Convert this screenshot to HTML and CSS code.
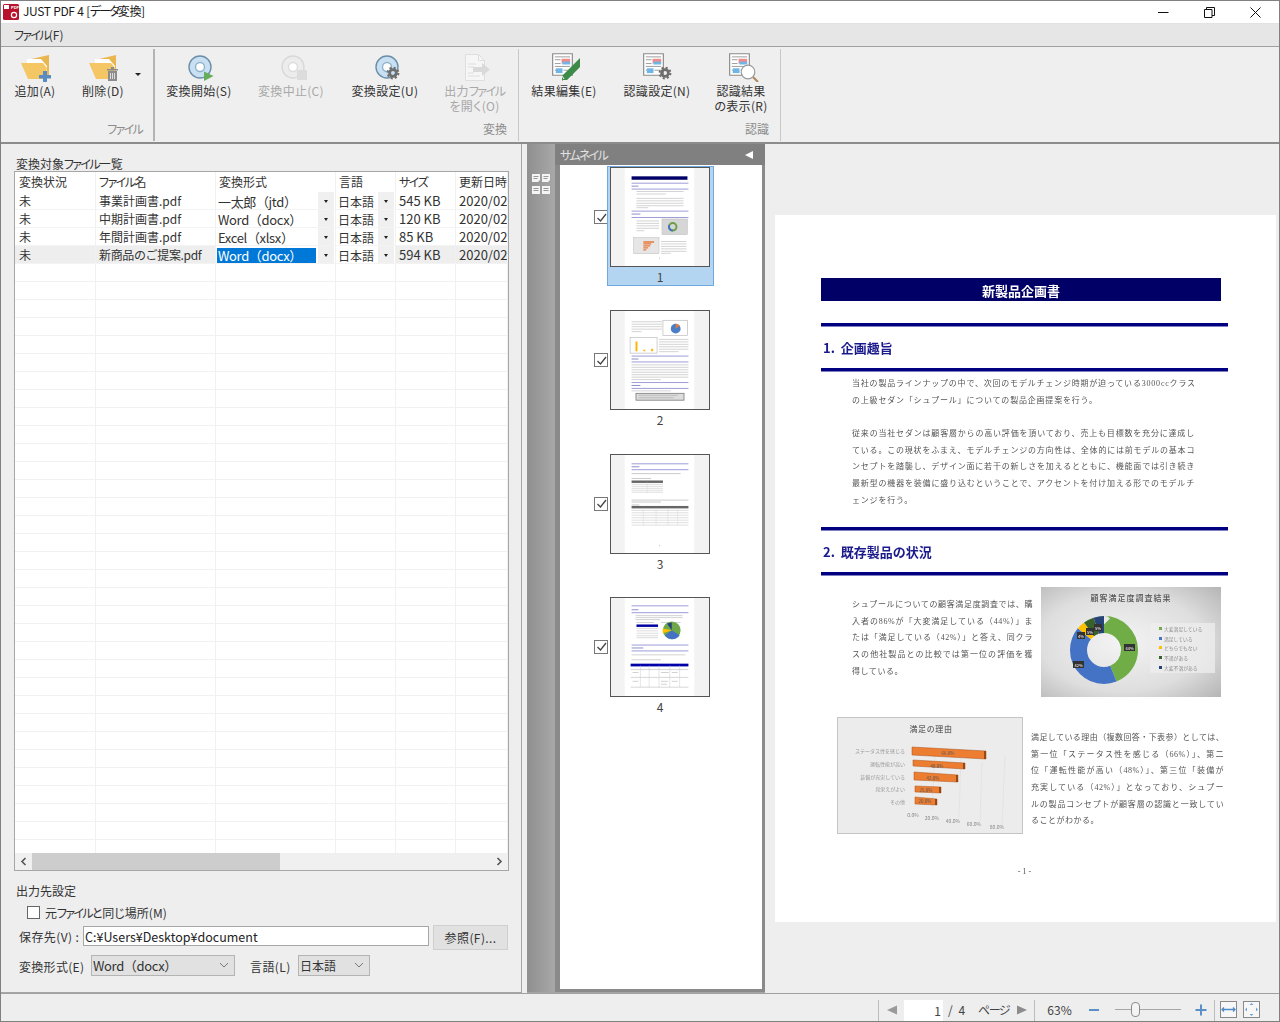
FILE: index.html
```html
<!DOCTYPE html>
<html lang="ja">
<head>
<meta charset="utf-8">
<title>JUST PDF 4 [データ変換]</title>
<link rel="stylesheet" href="styles.css">
</head>
<body>
<svg class="defs" width="0" height="0">
  <symbol id="gear" viewBox="-7 -7 14 14">
    <circle r="3.4" fill="none" stroke="#6e6e6e" stroke-width="2.8"/>
    <circle r="5.4" fill="none" stroke="#6e6e6e" stroke-width="2" stroke-dasharray="2.1 2.14"/>
  </symbol>
  <symbol id="resdoc" viewBox="0 0 22 24">
    <path d="M.7.7h20.6v22.6H.7z" fill="#fff" stroke="#8a8a8a" stroke-width="1.2"/>
    <path d="M3 4h16M3 7h6M3 11h6M3 14h16M3 18h3M12 18h7" stroke="#9a9a9a" stroke-width="1"/>
    <rect x="10" y="6" width="9" height="5" fill="#f08b8b"/>
    <rect x="4" y="16" width="7" height="5" fill="#6fb5e6"/>
    <rect x="11" y="9" width="8" height="3" fill="#6fb5e6"/>
  </symbol>
</svg>
<div class="app">
  <header class="titlebar">
    <svg class="applogo" width="16" height="16" viewBox="0 0 16 16"><rect width="16" height="16" rx="1.5" fill="#b8132d"/><rect x="1" y="1" width="5" height="4" fill="#fff"/><text x="8" y="5" class="logotext">PDF</text><circle cx="11" cy="11" r="2.6" fill="none" stroke="#fff" stroke-width="1.2"/></svg>
    <span class="apptitle">JUST PDF 4 [<span class="k">データ</span>変換]</span>
    <div class="winbtns">
      <svg width="11" height="11" viewBox="0 0 11 11"><path d="M0 5.5h10.5" stroke="#111" fill="none"/></svg>
      <svg width="11" height="11" viewBox="0 0 11 11"><path d="M.5 2.5h7.5v8H.5zM2.5 2.5V.5h8v8H8" stroke="#111" fill="none"/></svg>
      <svg width="11" height="11" viewBox="0 0 11 11"><path d="M.5.5l10 10M10.500.5l-10 10" stroke="#111" fill="none"/></svg>
    </div>
  </header>
  <nav class="menubar"><span><span class="k">ファイル</span>(F)</span></nav>

  <section class="ribbon">
    <div class="group g1">
      <div class="btns">
        <div class="rbtn w66">
          <svg class="ico" width="36" height="30" viewBox="0 0 36 30"><path d="M10 8L32 3v20H10z" fill="#e9b64f"/><path d="M10 7h14l6 7v6H10z" fill="#fff"/><path d="M4 11h22l4 5-2 11H11z" fill="#f4c664"/><path d="M26 19h4v4h4v3.500h-4v4h-4v-4h-4V23h4z" fill="#5a8cc4"/></svg>
          <span>追加(A)</span>
        </div>
        <div class="rbtn w70">
          <svg class="ico" width="36" height="30" viewBox="0 0 36 30"><path d="M10 8L31 3v20H10z" fill="#e9b64f"/><path d="M10 7h14l6 7v6H10z" fill="#fff"/><path d="M4 11h22l4 5-2 11H11z" fill="#f4c664"/><path d="M22 17h11v1.500H22zM26 15h3v2h-3zM23 19h9v10h-9z" fill="#8c8c8c"/><path d="M25.500 21v6M27.500 21v6M29.500 21v6" stroke="#ddd"/></svg>
          <span>削除(D)</span>
        </div>
        <div class="ddarrow"></div>
      </div>
      <div class="grouplabel"><span class="k">ファイル</span></div>
    </div>
    <div class="group g2">
      <div class="btns">
        <div class="rbtn w88">
          <svg class="ico" width="36" height="30" viewBox="0 0 36 30"><circle cx="19" cy="15" r="11" fill="#c8e0f2" stroke="#6b8fa9" stroke-width="1.400"/><circle cx="19" cy="15" r="4.500" fill="#fff" stroke="#8fb3cc" stroke-width="1.400"/><path d="M23 19.500l9.500 4.500-9.500 5z" fill="#66ad5a"/></svg>
          <span>変換開始(S)</span>
        </div>
        <div class="rbtn w96 off">
          <svg class="ico" width="36" height="30" viewBox="0 0 36 30"><circle cx="20" cy="15" r="11" fill="#ececec" stroke="#d9d9d9" stroke-width="1.400"/><circle cx="20" cy="15" r="4.500" fill="#fff" stroke="#dcdcdc" stroke-width="1.400"/><rect x="24" y="18" width="10" height="10" fill="#dcdcdc"/></svg>
          <span>変換中止(C)</span>
        </div>
        <div class="rbtn w92">
          <svg class="ico" width="36" height="30" viewBox="0 0 36 30"><circle cx="20" cy="15" r="11" fill="#c8e0f2" stroke="#6b8fa9" stroke-width="1.400"/><circle cx="20" cy="15" r="4.500" fill="#fff" stroke="#8fb3cc" stroke-width="1.400"/><use href="#gear" x="19" y="14" width="14" height="14"/></svg>
          <span>変換設定(U)</span>
        </div>
        <div class="rbtn w87 off">
          <svg class="ico" width="36" height="30" viewBox="0 0 36 30"><path d="M8.500 2.500h13l6 6v20h-19z" fill="#f6f6f6" stroke="#dedede"/><path d="M21.500 2.500v6h6" fill="none" stroke="#dedede"/><path d="M11 12h8M11 15h6M11 21h6M11 24h12" stroke="#dedede"/><path d="M16 15h9v-4l8 6.500-8 6.500v-4h-9z" fill="#d9d9d9"/></svg>
          <span>出力<span class="k">ファイル</span><br>を開く(O)</span>
        </div>
      </div>
      <div class="grouplabel">変換</div>
    </div>
    <div class="group g3">
      <div class="btns">
        <div class="rbtn w88">
          <svg class="ico" width="36" height="30" viewBox="0 0 36 30"><use href="#resdoc" x="6" y="1" width="21" height="23"/><path d="M34 6v9L21 28h-4l-1 1v-5z" fill="#3e8b49"/><path d="M16 24l2 3" stroke="#fff"/></svg>
          <span>結果編集(E)</span>
        </div>
        <div class="rbtn w98">
          <svg class="ico" width="36" height="30" viewBox="0 0 36 30"><use href="#resdoc" x="4" y="1" width="21" height="23"/><use href="#gear" x="19" y="14" width="14" height="14"/></svg>
          <span>認識設定(N)</span>
        </div>
        <div class="rbtn w70">
          <svg class="ico" width="36" height="30" viewBox="0 0 36 30"><use href="#resdoc" x="6" y="1" width="21" height="23"/><path d="M30 25l5 5" stroke="#b08a5c" stroke-width="2.200"/><circle cx="25" cy="20" r="6.800" fill="#fff" stroke="#9a9a9a" stroke-width="1.200"/></svg>
          <span>認識結果<br>の表示(R)</span>
        </div>
      </div>
      <div class="grouplabel">認識</div>
    </div>
  </section>

  <main class="main">
    <section class="leftpanel">
      <div class="listtitle">変換対象<span class="k">ファイル</span>一覧</div>
      <div class="listbox">
        <div class="row head"><div>変換状況</div><div><span class="k">ファイル</span>名</div><div>変換形式</div><div>言語</div><div><span class="k">サイズ</span></div><div>更新日時</div></div>
        <div class="row"><div>未</div><div>事業計画書.pdf</div><div class="pick"><span class="val">一太郎（jtd）</span><i class="dd"></i></div><div class="pick lang"><span class="val">日本語</span><i class="dd"></i></div><div class="num">545 KB</div><div class="num">2020/02</div></div>
        <div class="row"><div>未</div><div>中期計画書.pdf</div><div class="pick"><span class="val">Word（docx）</span><i class="dd"></i></div><div class="pick lang"><span class="val">日本語</span><i class="dd"></i></div><div class="num">120 KB</div><div class="num">2020/02</div></div>
        <div class="row"><div>未</div><div>年間計画書.pdf</div><div class="pick"><span class="val">Excel（xlsx）</span><i class="dd"></i></div><div class="pick lang"><span class="val">日本語</span><i class="dd"></i></div><div class="num">85 KB</div><div class="num">2020/02</div></div>
        <div class="row current"><div>未</div><div class="tightname">新商品のご提案.pdf</div><div class="pick"><span class="val sel">Word（docx）</span><i class="dd"></i></div><div class="pick lang"><span class="val">日本語</span><i class="dd"></i></div><div class="num">594 KB</div><div class="num">2020/02</div></div>
        <div class="row filler"><div></div><div></div><div></div><div></div><div></div><div></div></div>
        <div class="hscroll">
          <svg width="17" height="17" viewBox="0 0 17 17"><path d="M10.500 5l-3.500 3.500 3.500 3.500" fill="none" stroke="#555" stroke-width="1.600"/></svg>
          <div class="hthumb"></div>
          <svg class="hright" width="17" height="17" viewBox="0 0 17 17"><path d="M6.500 5l3.500 3.500-3.500 3.500" fill="none" stroke="#555" stroke-width="1.600"/></svg>
        </div>
      </div>
      <div class="outtitle">出力先設定</div>
      <label class="samedir"><span class="cb"></span><span>元<span class="k">ファイル</span>と同じ場所(M)</span></label>
      <div class="saverow">
        <span class="savelabel">保存先(V) :</span>
        <div class="pathbox">C:¥Users¥Desktop¥document</div>
        <div class="browse">参照(F)...</div>
      </div>
      <div class="formatrow">
        <span class="fmtlabel">変換形式(E)</span>
        <div class="combo wfmt"><span>Word（docx）</span><svg width="10" height="6" viewBox="0 0 10 6"><path d="M1 1l4 4 4-4" fill="none" stroke="#777"/></svg></div>
        <span class="langlabel">言語(L)</span>
        <div class="combo wlang"><span>日本語</span><svg width="10" height="6" viewBox="0 0 10 6"><path d="M1 1l4 4 4-4" fill="none" stroke="#777"/></svg></div>
      </div>
    </section>

    <section class="thumbpanel">
      <div class="strip">
        <svg width="20" height="23" viewBox="0 0 20 23">
          <g fill="#f4f4f4"><path d="M1 1h8v6l-2 2H1zM11 1h8v6l-2 2h-6zM1 13h8v8H1zM11 13h8v8h-8z"/></g>
          <path d="M2.500 3.500h5M2.500 5.500h4M12.500 3.500h5M12.500 5.500h4M2.500 15.500h5M2.500 17.500h5M12.500 15.500h5M12.500 17.500h5" stroke="#999"/>
        </svg>
      </div>
      <div class="thumbcol">
        <div class="thumbhead"><span><span class="k">サムネイル</span></span><svg width="8" height="8" viewBox="0 0 8 8"><path d="M8 0v8L0 4z" fill="#fff"/></svg></div>
        <div class="thumblist">
          <div class="titem">
            <span class="tcheck"><svg width="11" height="11" viewBox="0 0 11 11"><path d="M1.500 6l3 3 5.500-7" fill="none" stroke="#444" stroke-width="1.300"/></svg></span>
            <div class="tcard active">
              <div class="tpage"><svg width="98" height="98" viewBox="0 0 100 100">
                <rect width="100" height="100" fill="#f3f3f3"/><rect x="14" width="71" height="100" fill="#fff"/>
                <rect x="21" y="8.500" width="57" height="3.500" fill="#000066"/>
                <path d="M21 15.500h58M21 21.500h58M21 44h58M21 50.500h58" stroke="#9b9bd8" stroke-width="1"/>
                <path d="M21 18.500h7M21 47h9" stroke="#8b8bc8" stroke-width="1"/>
                <path d="M26 24h48M26 26.500h30M26 31h48M26 33.500h48M26 36h48M26 38.500h48M26 40.500h12M26 54h23M26 56.500h23M26 59h23M26 61.500h23M26 64h8M51 75h26M51 77.500h26M51 80h26M51 82.500h26M51 85h26M51 87h10" stroke="#c6c6c6" stroke-width=".8"/>
                <rect x="52" y="52" width="26" height="16" fill="#d6d6d6" stroke="#bbb" stroke-width=".5"/>
                <circle cx="63" cy="60" r="3.800" fill="none" stroke="#6a9f4a" stroke-width="2"/>
                <path d="M63 63.800a3.800 3.800 0 0 1 -3.500-5.500" fill="none" stroke="#4472c4" stroke-width="2"/>
                <rect x="23" y="71" width="26" height="16.500" fill="#e6e6e6" stroke="#bbb" stroke-width=".5"/>
                <path d="M33 75.500h11M33 77.500h8M33 79.500h7M33 81.500h5M33 83.500h3" stroke="#e8793a" stroke-width="1.300"/>
                <path d="M49 92h1" stroke="#bbb"/>
              </svg></div>
              <div class="tnum">1</div>
            </div>
          </div>
          <div class="titem">
            <span class="tcheck"><svg width="11" height="11" viewBox="0 0 11 11"><path d="M1.500 6l3 3 5.500-7" fill="none" stroke="#444" stroke-width="1.300"/></svg></span>
            <div class="tcard">
              <div class="tpage"><svg width="98" height="98" viewBox="0 0 100 100">
                <rect width="100" height="100" fill="#f3f3f3"/><rect x="14" width="71" height="100" fill="#fff"/>
                <rect x="53" y="9.500" width="25" height="15.500" fill="#fff" stroke="#bbb" stroke-width=".7"/>
                <circle cx="66" cy="18" r="5" fill="#4a7fc8"/><path d="M66 18v-5a5 5 0 0 1 4 2z" fill="#e8793a"/>
                <rect x="19.500" y="27" width="27.500" height="16" fill="#fff" stroke="#bbb" stroke-width=".7"/>
                <path d="M26 31v10M34 39.500v1.500M42 38.500v2.500" stroke="#ffb400" stroke-width="2"/>
                <path d="M21 11h31M21 13.500h31M21 16h31M21 18.500h31M21 21h10M49 29h30M49 31.500h30M49 34h30M49 36.500h30M49 39h30M49 41.500h20M21 55h58M21 57.500h58M21 60h58M21 62.500h58M21 65h58M21 67.500h58M21 70h30M21 81.500h40" stroke="#c6c6c6" stroke-width=".8"/>
                <path d="M21 46h58M21 52h58M21 73h58M21 79h58" stroke="#9b9bd8" stroke-width="1"/>
                <path d="M21 49h7M21 76h9" stroke="#8b8bc8" stroke-width="1"/>
                <rect x="25.500" y="84" width="49" height="7" fill="#ddd" stroke="#777" stroke-width=".8"/>
                <path d="M28 86h40M28 88.500h36" stroke="#aaa" stroke-width=".7"/>
              </svg></div>
              <div class="tnum">2</div>
            </div>
          </div>
          <div class="titem">
            <span class="tcheck"><svg width="11" height="11" viewBox="0 0 11 11"><path d="M1.500 6l3 3 5.500-7" fill="none" stroke="#444" stroke-width="1.300"/></svg></span>
            <div class="tcard">
              <div class="tpage"><svg width="98" height="98" viewBox="0 0 100 100">
                <rect width="100" height="100" fill="#f3f3f3"/><rect x="14" width="71" height="100" fill="#fff"/>
                <path d="M21 9h58M21 15h58" stroke="#9b9bd8" stroke-width="1"/>
                <path d="M21 12h8" stroke="#8b8bc8" stroke-width="1"/>
                <path d="M21 19h50M21 24h20M21 46h58M21 48h30M21 51h8" stroke="#bdbdbd" stroke-width=".8"/>
                <rect x="21" y="26" width="32" height="2.500" fill="#666"/>
                <rect x="21" y="52" width="58" height="2.500" fill="#666"/>
                <path d="M21 30h32M21 32h32M21 34h32M21 36h32M21 38h32M21 56.500h58M21 59h58M21 61.500h58M21 64h58M21 66.500h58M21 69h58M21 71.500h58" stroke="#d0d0d0" stroke-width=".7"/>
                <path d="M37 28v11M33 54v18M46 54v18M58 54v18M68 54v18" stroke="#d8d8d8" stroke-width=".5"/>
                <path d="M49 92.500h1" stroke="#bbb"/>
              </svg></div>
              <div class="tnum">3</div>
            </div>
          </div>
          <div class="titem">
            <span class="tcheck"><svg width="11" height="11" viewBox="0 0 11 11"><path d="M1.500 6l3 3 5.500-7" fill="none" stroke="#444" stroke-width="1.300"/></svg></span>
            <div class="tcard">
              <div class="tpage"><svg width="98" height="98" viewBox="0 0 100 100">
                <rect width="100" height="100" fill="#f3f3f3"/><rect x="14" width="71" height="100" fill="#fff"/>
                <path d="M21 8h58M21 15h58M21 48h58M21 54h58" stroke="#9b9bd8" stroke-width="1"/>
                <path d="M21 12h7M21 51h12" stroke="#8b8bc8" stroke-width="1"/>
                <path d="M25 18h48M25 20h48M25 22h25M26 25h18M51 25h20M21 58h55M21 63h30" stroke="#c6c6c6" stroke-width=".8"/>
                <rect x="26" y="27" width="22" height="2.500" fill="#0000a0"/>
                <path d="M26 31h22M26 33.500h22M26 36h22M26 38.500h22M26 40.500h22" stroke="#ccc" stroke-width=".7"/>
                <circle cx="62" cy="33" r="9" fill="#6ea84a"/><path d="M62 33l8 5a9 9 0 0 1 -15 0z" fill="#4472c4"/><path d="M62 33l-9 3a9 9 0 0 1 0-5z" fill="#ffc000"/><path d="M62 33l-5-7 5-1z" fill="#264478"/>
                <rect x="20" y="67" width="59" height="2.800" fill="#0000a8"/>
                <path d="M20 73h59M20 81h59M20 91h59" stroke="#bbb" stroke-width=".6"/>
                <path d="M30 69v22M39 69v22M49 69v22M60 69v22M70 69v22" stroke="#ccc" stroke-width=".5"/>
                <path d="M22 76h6M22 85h6M51 76h8M62 76h6M51 85h7M62 85h6M51 88h6" stroke="#bbb" stroke-width=".7"/>
              </svg></div>
              <div class="tnum">4</div>
            </div>
          </div>
        </div>
      </div>
    </section>

    <section class="preview">
      <article class="page">
        <div class="doctitle">新製品企画書</div>
        <div class="rule r1"></div>
        <h2 class="dochead">1. 企画趣旨</h2>
        <div class="rule"></div>
        <div class="para full">
          <div class="ln">当社の製品ラインナップの中で、次回のモデルチェンジ時期が迫っている3000ccクラス</div>
          <div class="ln last">の上級セダン「シュプール」についての製品企画提案を行う。</div>
        </div>
        <div class="para full p2">
          <div class="ln">従来の当社セダンは顧客層からの高い評価を頂いており、売上も目標数を充分に達成し</div>
          <div class="ln">ている。この現状をふまえ、モデルチェンジの方向性は、全体的には前モデルの基本コ</div>
          <div class="ln">ンセプトを踏襲し、デザイン面に若干の新しさを加えるとともに、機能面では引き続き</div>
          <div class="ln">最新型の機器を装備に盛り込むということで、アクセントを付け加える形でのモデルチ</div>
          <div class="ln last">ェンジを行う。</div>
        </div>
        <div class="rule r2"></div>
        <h2 class="dochead">2. 既存製品の状況</h2>
        <div class="rule"></div>
        <div class="docrow one">
          <div class="para side1">
            <div class="ln">シュプールについての顧客満足度調査では、購</div>
            <div class="ln">入者の86%が「大変満足している（44%）」ま</div>
            <div class="ln">たは「満足している（42%）」と答え、同クラ</div>
            <div class="ln">スの他社製品との比較では第一位の評価を獲</div>
            <div class="ln last">得している。</div>
          </div>
          <svg class="chart" width="180" height="110" viewBox="0 0 180 110">
            <defs><radialGradient id="cg" cx="45%" cy="50%" r="75%"><stop offset="0" stop-color="#f4f4f4"/><stop offset=".6" stop-color="#dedede"/><stop offset="1" stop-color="#b4b4b4"/></radialGradient></defs>
            <rect width="180" height="110" fill="url(#cg)"/>
            <text x="90" y="14" class="ct">顧客満足度調査結果</text>
            <g fill="none" stroke-width="17">
              <circle cx="63" cy="63" r="25.500" stroke="#70ad47" pathLength="100" stroke-dasharray="44 56" transform="rotate(-90 63 63)"/>
              <circle cx="63" cy="63" r="25.500" stroke="#4472c4" pathLength="100" stroke-dasharray="42 58" stroke-dashoffset="-44" transform="rotate(-90 63 63)"/>
              <circle cx="63" cy="63" r="25.500" stroke="#ffc000" pathLength="100" stroke-dasharray="4 96" stroke-dashoffset="-86" transform="rotate(-90 63 63)"/>
              <circle cx="63" cy="63" r="25.500" stroke="#38622a" pathLength="100" stroke-dasharray="5 95" stroke-dashoffset="-90" transform="rotate(-90 63 63)"/>
              <circle cx="63" cy="63" r="25.500" stroke="#264478" pathLength="100" stroke-dasharray="5 95" stroke-dashoffset="-95" transform="rotate(-90 63 63)"/>
            </g>
            <g class="tags">
              <rect x="83" y="57" width="11" height="7"/><text x="88.500" y="62.500">44%</text>
              <rect x="32" y="74" width="11" height="7"/><text x="37.500" y="79.500">42%</text>
              <rect x="36" y="45" width="8" height="7"/><text x="40" y="50.500">4%</text>
              <rect x="45" y="41" width="8" height="7"/><text x="49" y="46.500">5%</text>
              <rect x="53" y="37" width="8" height="7"/><text x="57" y="42.500">5%</text>
            </g>
            <rect x="109" y="36" width="65" height="50" fill="#eee" opacity=".75"/>
            <g class="legend">
              <rect x="118" y="40" width="3" height="3" fill="#70ad47"/><text x="123" y="43.500">大変満足している</text>
              <rect x="118" y="50" width="3" height="3" fill="#4472c4"/><text x="123" y="53.500">満足している</text>
              <rect x="118" y="59" width="3" height="3" fill="#ffc000"/><text x="123" y="62.500">どちらでもない</text>
              <rect x="118" y="69" width="3" height="3" fill="#38622a"/><text x="123" y="72.500">不満がある</text>
              <rect x="118" y="79" width="3" height="3" fill="#264478"/><text x="123" y="82.500">大変不満がある</text>
            </g>
          </svg>
        </div>
        <div class="docrow two">
          <svg class="chart" width="186" height="117" viewBox="0 0 186 117">
            <rect x=".5" y=".5" width="185" height="116" fill="#ececec" stroke="#c4c4c4"/>
            <text x="94" y="15" class="ct2">満足の理由</text>
            <path d="M95 93l3-60M122 100l2-62M143 105l2-60M165 110l3-72" stroke="#dedede" stroke-width=".6" fill="none"/>
            <g class="bars">
              <path d="M75 30l74 4v8l-74-4z"/><path d="M76 43l52 3v6l-52-3z"/><path d="M77 55l44 3v7l-44-2z"/><path d="M78 69l26 1v6l-26-1z"/><path d="M78 80l22 2v6l-22-1z"/>
            </g>
            <g fill="#843c0c" opacity=".8"><path d="M149 34h-2v8h2zM128 46h-2v6h2zM121 58h-2v7h2zM104 70h-2v6h2zM100 82h-2v6h2z"/></g>
            <g class="blab">
              <text x="68" y="36">ステータス性を感じる</text><text x="68" y="49">運転性能が高い</text><text x="68" y="62">装備が充実している</text><text x="68" y="74">見栄えがよい</text><text x="68" y="87">その他</text>
            </g>
            <g class="bval"><text x="111" y="38">66.0%</text><text x="100" y="51">48.0%</text><text x="96" y="63">42.0%</text><text x="89" y="75">25.0%</text><text x="88" y="86">20.0%</text></g>
            <g class="bax"><text x="76" y="100">0.0%</text><text x="95" y="103">20.0%</text><text x="116" y="106">40.0%</text><text x="137" y="109">60.0%</text><text x="160" y="112">80.0%</text></g>
          </svg>
          <div class="para side2">
            <div class="ln tight">満足している理由（複数回答・下表参）としては、</div>
            <div class="ln">第一位「ステータス性を感じる（66%）」、第二</div>
            <div class="ln">位「運転性能が高い（48%）」、第三位「装備が</div>
            <div class="ln">充実している（42%）」となっており、シュプー</div>
            <div class="ln tight">ルの製品コンセプトが顧客層の認識と一致してい</div>
            <div class="ln last">ることがわかる。</div>
          </div>
        </div>
        <div class="pageno">- 1 -</div>
      </article>
    </section>
  </main>

  <footer class="status">
    <span class="vsep"></span>
    <span class="navbtn"><svg width="10" height="10" viewBox="0 0 10 10"><path d="M10 0.500v9L0 5z" fill="#9a9a9a"/></svg></span>
    <span class="pageinput">1</span>
    <span class="pagecount">/ 4</span>
    <span class="pagewd">ページ</span>
    <span class="navbtn next"><svg width="10" height="10" viewBox="0 0 10 10"><path d="M0 0.500v9L10 5z" fill="#8c8c8c"/></svg></span>
    <span class="vsep"></span>
    <span class="zoomval">63%</span>
    <svg class="zmbtn minus" width="12" height="12" viewBox="0 0 12 12"><path d="M1 6h10" stroke="#5a8fc8" stroke-width="2"/></svg>
    <span class="slider"><span class="knob"></span></span>
    <svg class="zmbtn plus" width="12" height="12" viewBox="0 0 12 12"><path d="M0.500 6h11M6 .500v11" stroke="#5a8fc8" stroke-width="2"/></svg>
    <span class="vsep sp"></span>
    <svg class="fit" width="17" height="17" viewBox="0 0 17 17"><rect x=".5" y=".5" width="16" height="16" fill="#f7f7f7" stroke="#8a8a8a"/><path d="M2 8.500h13M4 6.500l-2 2 2 2M13 6.500l2 2-2 2" fill="none" stroke="#4f8ac9" stroke-width="1.300"/></svg>
    <svg class="fit" width="17" height="17" viewBox="0 0 17 17"><rect x=".5" y=".5" width="16" height="16" fill="#f7f7f7" stroke="#8a8a8a"/><path d="M8.500 2l-2 2h4zM8.500 15l-2-2h4zM2 8.500l2-2v4zM15 8.500l-2-2v4z" fill="#6fa3d8"/></svg>
  </footer>
</div>
</body>
</html>
```
FILE: styles.css
```css
* { box-sizing: border-box; }
html, body { margin: 0; padding: 0; }
body {
  font-family: "Noto Sans CJK JP", "Noto Sans", sans-serif;
  font-size: 12px;
  color: #333;
  background: #eee;
}
.defs { position: absolute; }
.k { letter-spacing: -1.7px; font-feature-settings: "palt"; }
.app {
  width: 1280px;
  height: 1022px;
  display: flex;
  flex-direction: column;
  border: 1px solid #808080;
  overflow: hidden;
  background: #eee;
}

/* title bar */
.titlebar {
  height: 23px;
  flex: none;
  display: flex;
  align-items: center;
  background: #fff;
  padding-left: 2px;
  color: #1a1a1a;
  border-bottom: 1px solid #e2e2e2;
}
.applogo { flex: none; }
.logotext { font-size: 4px; fill: #fff; font-family: "Liberation Sans", sans-serif; font-weight: 700; }
.apptitle { margin-left: 4px; font-size: 12px; font-feature-settings: "palt"; letter-spacing: -.4px; word-spacing: .5px; line-height: 16px; margin-top: -2px; }
.apptitle .k { letter-spacing: -1.9px; }
.winbtns { margin-left: auto; display: flex; gap: 35px; padding-right: 18px; }

/* menu */
.menubar {
  height: 23px;
  flex: none;
  background: #e6e6e6;
  border-bottom: 1px solid #a0a0a0;
  padding: 3px 0 0 13px;
  line-height: 16px;
  font-feature-settings: "palt";
  color: #333;
}

/* ribbon */
.ribbon {
  height: 97px;
  flex: none;
  display: flex;
  padding-left: 1px;
  background: #efefef;
  border-bottom: 2px solid #8c8c8c;
}
.group {
  display: flex;
  flex-direction: column;
  height: 92px;
  margin-top: 2px;
  padding-right: 11px;
  border-right: 1px solid #c8c8c8;
}
.g1 { width: 153px; border-right: 2px solid #b4b4b4; }
.g2 { width: 364px; }
.g3 { width: 262px; padding-left: 1px; }
.btns { display: flex; margin-right: -11px; flex: none; }
.rbtn {
  flex: none;
  display: flex;
  flex-direction: column;
  align-items: center;
  padding-top: 3px;
  text-align: center;
  line-height: 15px;
  color: #333;
  font-size: 12px;
  font-feature-settings: "palt";
  letter-spacing: .3px;
}
.rbtn .k { letter-spacing: -1.4px; }
.rbtn.off { color: #a8a8a8; }
.ico { display: block; margin-bottom: 1px; }
.w66 { width: 66px; }
.w70 { width: 70px; }
.w87 { width: 87px; }
.w88 { width: 88px; }
.w92 { width: 92px; }
.w96 { width: 96px; }
.w98 { width: 98px; }
.ddarrow {
  margin: 24px 0 0 -3px;
  width: 0;
  height: 0;
  border-left: 3px solid transparent;
  border-right: 3px solid transparent;
  border-top: 3px solid #222;
}
.grouplabel {
  margin-top: auto;
  text-align: right;
  color: #8c8c8c;
  line-height: 14px;
  padding-bottom: 5px;
  font-feature-settings: "palt";
}

/* main */
.main { flex: 1; min-height: 0; display: flex; }

.leftpanel {
  width: 521px;
  flex: none;
  padding: 13px 13px 0;
  border-right: 1px solid #a6a6a6;
  border-bottom: 1px solid #a6a6a6;
  background: #eee;
}
.listtitle { padding-left: 2px; line-height: 14px; font-feature-settings: "palt"; color: #333; }
.listbox {
  width: 495px;
  height: 700px;
  border: 1px solid #a6a6a6;
  background: #fff;
  display: flex;
  flex-direction: column;
  overflow: hidden;
}
.row {
  display: grid;
  grid-template-columns: 81px 120px 120px 60px 60px 1fr;
  height: 18px;
  flex: none;
  line-height: 18px;
  border-bottom: 1px solid #f3f3f3;
}
.row > div {
  padding-left: 3px;
  white-space: nowrap;
  overflow: hidden;
  border-right: 1px solid #f1f1f1;
}
.row > div:first-child { padding-left: 4px; }
.row.head { height: 20px; line-height: 20px; font-feature-settings: "palt"; border-bottom: 0; }
.row.head .k { letter-spacing: -1.5px; }
.row .num { font-size: 13px; line-height: 17px; }
.row .tightname { letter-spacing: -.35px; }
.row.current > div { background: #eee; }
.row > div.pick {
  display: flex;
  padding: 0 1px 0 1px;
  background: #fff;
  font-size: 13px;
  letter-spacing: -.35px;
  overflow: visible;
}
.row > div.pick.lang { font-size: 12px; letter-spacing: 0; }
.val { flex: 1; min-width: 0; padding-left: 1px; line-height: 15px; margin-top: 2px; height: 15px; }
.val.sel { background: #0078d7; color: #fff; margin-right: 2px; }
.dd {
  flex: none;
  width: 16px;
  height: 17px;
  background: #f0f0f0;
  position: relative;
}
.dd::after {
  content: "";
  position: absolute;
  left: 6px;
  top: 8px;
  border-left: 2.5px solid transparent;
  border-right: 2.5px solid transparent;
  border-top: 3px solid #222;
}
.row.filler {
  flex: 1;
  height: auto;
  border-bottom: 0;
  background: repeating-linear-gradient(to bottom, #fff 0 17px, #f1f1f1 17px 18px);
}
.hscroll {
  height: 17px;
  flex: none;
  display: flex;
  background: #f0f0f0;
}
.hthumb { width: 248px; background: #cdcdcd; }
.hright { margin-left: auto; }

.outtitle { margin-top: 13px; padding-left: 2px; line-height: 14px; color: #333; }
.samedir { display: flex; align-items: center; margin: 7px 0 0 13px; height: 15px; font-feature-settings: "palt"; }
.cb { width: 13px; height: 13px; border: 1px solid #666; background: #fff; margin-right: 5px; }
.saverow { display: flex; align-items: center; margin-top: 5px; padding-left: 5px; height: 25px; }
.savelabel { width: 64px; flex: none; font-feature-settings: "palt"; letter-spacing: .4px; white-space: nowrap; margin-top: -2px; }
.pathbox {
  width: 347px;
  height: 20px;
  margin-top: -4px;
  border: 1px solid #a6a6a6;
  background: #fff;
  font-size: 12.500px;
  line-height: 19px;
  padding-left: 1px;
  color: #222;
}
.browse {
  width: 75px;
  height: 25px;
  margin-left: 4px;
  background: #e1e1e1;
  border: 1px solid #cfcfcf;
  text-align: center;
  line-height: 23px;
  font-feature-settings: "palt";
  letter-spacing: .4px;
}
.formatrow { display: flex; align-items: center; margin-top: 4px; padding-left: 5px; height: 22px; }
.fmtlabel { width: 72px; flex: none; font-feature-settings: "palt"; padding-top: 3px; letter-spacing: .3px; white-space: nowrap; }
.combo {
  height: 21px;
  background: #e1e1e1;
  border: 1px solid #b4b4b4;
  display: flex;
  align-items: center;
  justify-content: space-between;
  padding: 0 5px 0 1px;
  font-size: 13px;
  letter-spacing: -.35px;
}
.wfmt { width: 144px; }
.wlang { width: 72px; font-size: 12px; letter-spacing: 0; }
.langlabel { margin: 0 7px 0 15px; width: 41px; flex: none; font-feature-settings: "palt"; padding-top: 3px; letter-spacing: .4px; white-space: nowrap; }

/* thumbnails */
.thumbpanel {
  flex: none;
  width: 238px;
  margin-left: 5px;
  display: flex;
  border-bottom: 1px solid #a6a6a6;
}
.strip {
  width: 28px;
  flex: none;
  background: linear-gradient(to right, #8f8f8f, #a8a8a8);
  padding: 29px 0 0 4px;
}
.strip svg { display: block; }
.thumbcol { flex: 1; display: flex; flex-direction: column; background: #8a8a8a; padding: 0 3px 3px 5px; }
.thumbhead {
  height: 21px;
  flex: none;
  margin: 0 -3px 0 -5px;
  padding: 0 12px 0 5px;
  background: #808080;
  color: #e2e2e2;
  display: flex;
  align-items: center;
  justify-content: space-between;
  font-feature-settings: "palt";
  line-height: 19px;
}
.thumblist {
  flex: 1;
  background: #fff;
  padding-top: 1px;
  display: flex;
  flex-direction: column;
  gap: 23.330px;
  overflow: hidden;
}
.titem { display: flex; align-items: flex-start; padding-left: 34px; }
.tcheck {
  width: 14px;
  height: 14px;
  margin-top: 44px;
  border: 1.500px solid #777;
  background: #fff;
  display: flex;
  align-items: center;
  justify-content: center;
  flex: none;
}
.tcheck svg { display: block; }
.tcard {
  width: 107px;
  height: 120px;
  margin-left: -1px;
  padding: 1px 0 0 3px;
}
.tcard.active { background: #b3d5f2; outline: 1px solid #6fa9de; outline-offset: -1px; }
.tpage { width: 100px; height: 100px; border: 1px solid #555; }
.tpage svg { display: block; }
.tnum { width: 100px; text-align: center; line-height: 20px; color: #444; font-size: 12px; }

/* preview */
.preview { flex: 1; min-width: 0; padding: 71px 0 0 10px; overflow: hidden; background: #eee; }
.page {
  width: 501px;
  height: 707px;
  background: #fff;
  padding: 63px 0 0 46px;
  filter: blur(.35px);
  font-family: "Liberation Serif", "Noto Sans CJK JP", serif;
}
.doctitle {
  width: 400px;
  height: 23px;
  background: #000066;
  color: #fff;
  text-align: center;
  line-height: 25px;
  font-family: "Noto Sans CJK JP", sans-serif;
  font-weight: 700;
  font-size: 13px;
}
.rule {
  width: 407px;
  height: 4px;
  background: #000080;
  border-bottom: 1px solid #7f7fc4;
}
.r1 { margin-top: 22px; }
.dochead {
  margin: 0;
  height: 41px;
  line-height: 42px;
  font-size: 13px;
  font-weight: 700;
  color: #1a1a8c;
  padding-left: 2px;
  word-spacing: 3px;
  font-family: "Noto Sans CJK JP", sans-serif;
}
.para { color: #555; font-size: 8px; line-height: 16.600px; letter-spacing: .8px; }
.para.full { width: 343px; margin: 4px 0 0 31px; }
.para.p2 { margin-top: 17px; }
.ln { white-space: nowrap; text-align: justify; text-align-last: justify; text-justify: inter-character; }
.ln.last { text-align-last: left; }
.ln.tight { letter-spacing: .35px; }
.r2 { margin-top: 18px; }
.docrow { display: flex; align-items: flex-start; }
.one { margin-top: 11px; }
.side1 { width: 181px; margin: 10px 8px 0 31px; flex: none; letter-spacing: .55px; }
.two { margin: 20px 0 0 16px; }
.side2 { width: 193px; margin: 13px 0 0 8px; flex: none; letter-spacing: .5px; }
.chart { display: block; flex: none; font-family: "Noto Sans CJK JP", sans-serif; }
.ct { font-size: 8px; fill: #555; text-anchor: middle; font-weight: 500; letter-spacing: 1px; }
.ct2 { font-size: 8px; fill: #666; text-anchor: middle; font-weight: 500; letter-spacing: .6px; }
.bars path { fill: #ed7d31; stroke: #a9531a; stroke-width: .5px; }
.tags rect { fill: #333; }
.tags text { font-size: 4px; fill: #fff; text-anchor: middle; }
.legend text { font-size: 4.800px; fill: #8a8a8a; }
.blab text { font-size: 5px; fill: #999; text-anchor: end; }
.bval text { font-size: 4.500px; fill: #555; text-anchor: middle; }
.bax text { font-size: 5px; fill: #888; text-anchor: middle; }
.pageno { width: 407px; margin-top: 30px; text-align: center; font-size: 8px; line-height: 16px; color: #555; }

/* status */
.status {
  height: 28px;
  flex: none;
  display: flex;
  align-items: center;
  background: #eee;
  border-top: 1px solid #a0a0a0;
  padding: 4px 0 0 877px;
  color: #444;
}
.vsep { width: 1px; height: 21px; background: #bdbdbd; flex: none; align-self: flex-end; }
.vsep.sp { margin: 0 5px 0 0; }
.navbtn { width: 25px; display: flex; justify-content: center; flex: none; }
.navbtn.next { margin-left: 3px; }
.pageinput {
  width: 39px;
  height: 21px;
  align-self: flex-end;
  background: #fff;
  text-align: right;
  padding-right: 2px;
  line-height: 21px;
  flex: none;
}
.pagecount { width: 35px; padding-left: 5px; flex: none; word-spacing: 3px; white-space: nowrap; }
.pagewd { width: 28px; flex: none; font-feature-settings: "palt"; white-space: nowrap; letter-spacing: -1.5px; }
.zoomval { width: 48px; padding-left: 1px; text-align: center; flex: none; }
.zmbtn { flex: none; }
.minus { margin: 0 3px 0 5px; }
.slider {
  width: 66px;
  height: 1px;
  background: #a8a8a8;
  position: relative;
  margin: 0 14px 0 12px;
  flex: none;
}
.knob {
  position: absolute;
  left: 16px;
  top: -7px;
  width: 9px;
  height: 15px;
  background: #f4f4f4;
  border: 1px solid #8c8c8c;
  border-radius: 4px;
}
.plus { margin-right: 7px; }
.fit { flex: none; margin-right: 6px; }
```
